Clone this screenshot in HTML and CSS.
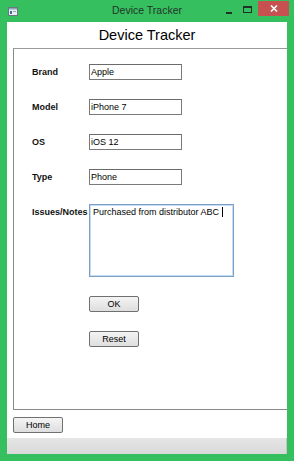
FILE: index.html
```html
<!DOCTYPE html>
<html lang="en">
<head>
  <meta charset="UTF-8">
  <meta name="viewport" content="width=device-width, initial-scale=1">
  <title>Device Tracker</title>
  <link rel="stylesheet" href="styles.css">
</head>
<body>

  <div class="window">
    <div class="titlebar">
      <div class="title-left">
        <svg class="app-icon" width="10" height="9" viewBox="0 0 10 9">
          <rect x="0.5" y="0.5" width="9" height="8" fill="#e9eef2" stroke="#6d7780"/>
          <rect x="1" y="1" width="8" height="1.5" fill="#8aa4bd"/>
          <rect x="2" y="4" width="2" height="3" fill="#3d6fa3"/>
          <rect x="5" y="4" width="3" height="1" fill="#9aa3ab"/>
        </svg>
      </div>
      <span class="title">Device Tracker</span>
      <div class="title-controls">
        <span class="ctl-min"></span>
        <span class="ctl-max"></span>
        <span class="ctl-close">
          <svg width="8" height="7" viewBox="0 0 8 7">
            <path d="M1 0.5 L7 6.5 M7 0.5 L1 6.5" stroke="#fff" stroke-width="1.6"/>
          </svg>
        </span>
      </div>
    </div>

    <div class="client">
      <h1 class="heading">Device Tracker</h1>

      <div class="panel">
        <form class="form">
          <label class="label">Brand</label>
          <input class="field" type="text" value="Apple">

          <label class="label">Model</label>
          <input class="field" type="text" value="iPhone 7">

          <label class="label">OS</label>
          <input class="field" type="text" value="iOS 12">

          <label class="label">Type</label>
          <input class="field" type="text" value="Phone">

          <label class="label label-top">Issues/Notes</label>
          <div class="notes">Purchased from distributor ABC <span class="caret"></span></div>

          <span></span>
          <button type="button" class="btn">OK</button>

          <span></span>
          <button type="button" class="btn">Reset</button>
        </form>
      </div>

      <div class="footer">
        <button type="button" class="btn">Home</button>
      </div>

      <div class="statusbar"></div>
    </div>
  </div>

</body>
</html>
```

FILE: styles.css
```css
* {
  box-sizing: border-box;
}

body {
  margin: 0;
  padding: 0;
  font-family: "Liberation Sans", Arial, sans-serif;
}

.window {
  width: 294px;
  height: 461px;
  background: #35bf5f;
  padding: 0 7px 7px;
  display: flex;
  flex-direction: column;
}

/* Title bar */
.titlebar {
  height: 22px;
  margin: 0 -7px;
  display: grid;
  grid-template-columns: 1fr auto 1fr;
  align-items: start;
}

.title-left {
  padding: 7px 0 0 8px;
}

.app-icon {
  display: block;
}

.title {
  font-size: 10.5px;
  line-height: 20px;
  color: #24352a;
}

.title-controls {
  display: flex;
  justify-content: flex-end;
  align-items: flex-start;
  padding-right: 5px;
}

.ctl-min {
  width: 6px;
  height: 2px;
  background: #1d3325;
  margin: 12px 11px 0 0;
}

.ctl-max {
  width: 9px;
  height: 7px;
  border: 1px solid #1d3325;
  border-top-width: 2px;
  margin: 6px 6px 0 0;
}

.ctl-close {
  width: 31px;
  height: 15px;
  margin-top: 1px;
  background: #c75050;
  display: flex;
  justify-content: center;
  align-items: center;
}

.ctl-close svg {
  display: block;
}

/* Client area */
.client {
  flex: 1;
  background: #fff;
  display: flex;
  flex-direction: column;
  overflow: hidden;
}

.heading {
  margin: 0;
  height: 26px;
  font-size: 14.5px;
  font-weight: normal;
  line-height: 26px;
  text-align: center;
  color: #000;
}

.panel {
  height: 362px;
  margin: 0 -10px 0 6px;
  border: 1px solid #8a8a8a;
  border-top-color: #9a9a9a;
}

.form {
  display: grid;
  grid-template-columns: 57px 93px;
  row-gap: 19px;
  align-items: center;
  padding: 15px 0 0 18px;
}

.label {
  font-size: 9px;
  font-weight: bold;
  color: #111;
}

.label-top {
  align-self: start;
  line-height: 16px;
}

.field {
  width: 93px;
  height: 16px;
  margin: 0;
  padding: 0 0 0 1px;
  border: 1px solid #7a7a7a;
  border-top-color: #6a6a6a;
  background: #fff;
  font-family: inherit;
  font-size: 9px;
  color: #000;
  outline: none;
}

.notes {
  width: 145px;
  height: 73px;
  padding: 2px 3px;
  border: 1px solid #7d9ec6;
  box-shadow: inset 0 0 0 1px #c5dcf3;
  font-size: 9px;
  line-height: 11px;
  color: #000;
  white-space: nowrap;
}

.caret {
  display: inline-block;
  width: 1px;
  height: 10px;
  background: #000;
  vertical-align: -2px;
}

.btn {
  width: 50px;
  height: 16px;
  margin: 0;
  padding: 0;
  border: 1px solid #707070;
  border-radius: 2px;
  background: linear-gradient(#f4f4f4, #dedede);
  font-family: inherit;
  font-size: 9px;
  color: #000;
  cursor: pointer;
}

.footer {
  height: 28px;
  padding: 4px 6px 0;
}

.statusbar {
  height: 16px;
  background: linear-gradient(#e6e6e6, #d9d9d9);
  border-right: 1px solid #c4c4c4;
}
```
